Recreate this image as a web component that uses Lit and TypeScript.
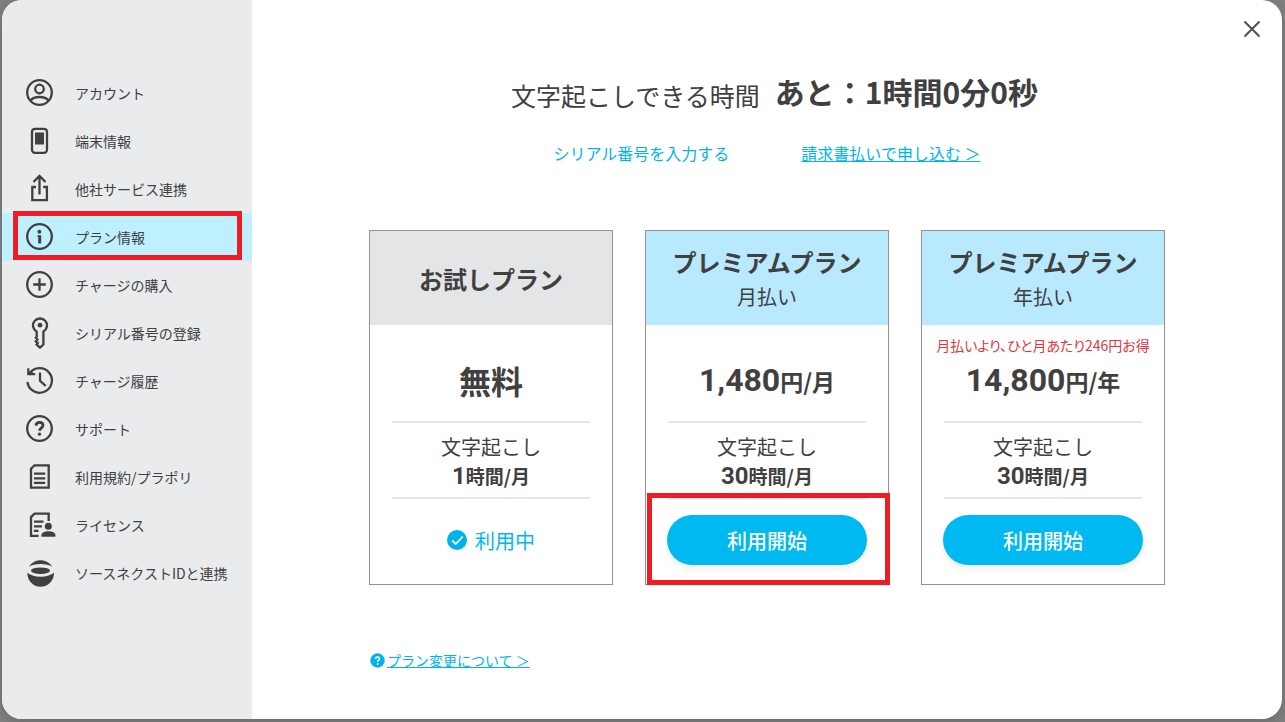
import { LitElement, html, css, svg, nothing } from "lit";
import { customElement, property, state } from "lit/decorators.js";
import { classMap } from "lit/directives/class-map.js";

const icons: Record<string, unknown> = {
  account: svg`<circle cx="15.5" cy="15.5" r="12.3"/><circle cx="15.5" cy="12" r="4.3"/><path d="M6.5 23.5C8.5 20.8 11.5 20 15.5 20s7 .8 9 3.5"/>`,
  device: svg`<rect x="8" y="3.8" width="15" height="24" rx="3"/><rect class="fill" x="11" y="7.5" width="9" height="12"/>`,
  share: svg`<path d="M15.5 21.5V3.5M9.5 9l6-6 6 6M12 14H8.3v13.2h14.6V14h-3.7"/>`,
  info: svg`<circle cx="15.5" cy="15.5" r="12.3"/><circle class="fill" cx="15.4" cy="10.8" r="2"/><path class="fill" d="M13.5 14.2h3.7v8.2h-3v-6.4h-.7z"/>`,
  plus: svg`<circle cx="15.5" cy="15.5" r="12.3"/><path d="M15.5 9.2v12.6M9.2 15.5h12.6"/>`,
  key: svg`<path d="M12.6 14.6a7 7 0 1 1 6.8 0V27.6L16 30.6l-3.4-3 1.2-1.6-2-1.6 1.6-1.9-1.6-1.8 1-1.3z"/><circle class="fill" cx="16" cy="8.2" r="2.4"/>`,
  history: svg`<path d="M3.4 17A12.3 12.3 0 1 0 5.6 8.3M16 7.5v8.3l5.7 5"/><path class="fill" d="M3.2 3.2h2.2v3.9l2.6-.4 1.2 1.4h2v2.2H3.2z"/>`,
  help: svg`<circle cx="15.5" cy="15.5" r="12.3"/><path class="bold" d="M12 12.6c.1-2 1.5-3.2 3.5-3.2s3.5 1.2 3.5 3c0 2.5-3.4 2.4-3.4 5.4"/><circle class="fill" cx="15.5" cy="21.2" r="1.6"/>`,
  document: svg`<path d="M10.5 4.3H24.7V26.7H7V7.8z"/><path d="M10 12.7h11.2M10 17.3h11.2M10 21.9h11.2"/>`,
  license: svg`<path d="M24.7 12V4.6H10.5L7 8.1v18.8h7.6M10 12.7h9.5M10 17.3h8M10 21.9h4.5"/><circle class="fill" cx="24.3" cy="17.3" r="3.5"/><path class="fill" d="M17.4 27.7v-1.5c0-2.8 3.6-4 7-4s7 1.2 7 4v1.5z"/>`,
  globe: svg`<path class="fill" d="M5 9.8C7.5 5.6 11.5 3.2 16.5 3.2S25.8 5.6 28.3 9.8C25.5 7.8 21.5 7 16.5 7S7.8 7.8 5 9.8z"/><ellipse class="fill" cx="16.5" cy="13.7" rx="9.5" ry="3.3"/><path class="fill" d="M3.3 15.8C6 18.2 10.5 19.7 16.6 19.7S27.2 18.2 30 15.8C30 24 24 29.7 16.6 29.7S3.3 24 3.3 15.8z"/>`,
};

const navItems = [
  ["account", "アカウント"],
  ["device", "端末情報"],
  ["share", "他社サービス連携"],
  ["info", "プラン情報"],
  ["plus", "チャージの購入"],
  ["key", "シリアル番号の登録"],
  ["history", "チャージ履歴"],
  ["help", "サポート"],
  ["document", "利用規約/プラポリ"],
  ["license", "ライセンス"],
  ["globe", "ソースネクストIDと連携"],
];

interface Plan {
  name: string;
  billing?: string;
  note?: string;
  amount?: string;
  unit: string;
  hours: string;
  active?: boolean;
  marked?: boolean;
}

const plans: Plan[] = [
  { name: "お試しプラン", unit: "無料", hours: "1", active: true },
  { name: "プレミアムプラン", billing: "月払い", amount: "1,480", unit: "円/月", hours: "30", marked: true },
  { name: "プレミアムプラン", billing: "年払い", note: "月払いより、ひと月あたり246円お得", amount: "14,800", unit: "円/年", hours: "30" },
];

@customElement("side-nav")
export class SideNav extends LitElement {
  @state() current = "info";

  static styles = css`
    :host {
      display: block;
      background: #eaebed;
    }
    ul {
      list-style: none;
      margin: 0;
      padding: 69px 0 0;
    }
    .item {
      position: relative;
    }
    .link {
      display: flex;
      align-items: center;
      gap: 19px;
      height: 48px;
      padding-left: 22px;
      color: #404040;
      font-size: 14px;
      text-decoration: none;
      white-space: nowrap;
    }
    .current {
      background: #bff0ff;
    }
    .mark {
      position: absolute;
      inset: -2px 10px 1px 11px;
      border: 5px solid #ee1c23;
      pointer-events: none;
    }
    svg {
      width: 32px;
      height: 32px;
      flex: none;
      fill: none;
      stroke: #404040;
      stroke-width: 2.3;
    }
    .fill {
      fill: #404040;
      stroke: none;
    }
    .bold {
      stroke-width: 2.8;
    }
  `;

  render() {
    return html`<nav>
      <ul>
        ${navItems.map(([id, label]) => html`<li class="item">
          <a href="#${id}" class=${classMap({ link: true, current: id === this.current })}
            @click=${() => (this.current = id)}>
            <svg viewBox="0 0 32 32" aria-hidden="true">${icons[id]}</svg>
            <span>${label}</span>
          </a>
          ${id === "info" ? html`<div class="mark"></div>` : nothing}
        </li>`)}
      </ul>
    </nav>`;
  }
}

@customElement("plan-card")
export class PlanCard extends LitElement {
  @property({ attribute: false }) plan!: Plan;

  static styles = css`
    :host {
      display: block;
      flex: 0 1 244px;
      box-sizing: border-box;
      position: relative;
      border: 1px solid #929292;
      text-align: center;
      white-space: nowrap;
    }
    .head {
      display: flex;
      flex-direction: column;
      justify-content: center;
      box-sizing: border-box;
      height: 94px;
      padding-top: 2px;
      background: #b9e9ff;
    }
    .trial {
      background: #e4e5e7;
    }
    h2 {
      margin: 0;
      font-size: 24px;
      line-height: 36px;
      font-weight: 700;
    }
    .billing {
      font-size: 20px;
      line-height: 34px;
    }
    .note {
      height: 32px;
      padding-top: 4px;
      box-sizing: border-box;
      color: #e03840;
      font-size: 14px;
      line-height: 32px;
      font-feature-settings: "palt";
    }
    .price {
      height: 64px;
      line-height: 46px;
      font-size: 23px;
      font-weight: 700;
    }
    .free {
      font-size: 32px;
    }
    .digits {
      font-family: Roboto, sans-serif;
      font-weight: 700;
    }
    .amount {
      font-size: 32px;
    }
    .quota {
      margin: 0 22px;
      padding: 9px 0 7px;
      border: solid #e6e6e6;
      border-width: 2px 0;
      font-size: 20px;
      line-height: 30px;
    }
    .hours {
      font-size: 19px;
      line-height: 28px;
      font-weight: 700;
    }
    .count {
      font-size: 24px;
    }
    .action {
      display: flex;
      justify-content: center;
      padding: 16px 21px 19px;
    }
    button {
      flex: 1;
      height: 50px;
      padding: 0;
      border: 0;
      border-radius: 25px;
      background: #00b9f1;
      box-shadow: 0 4px 6px rgba(0, 0, 0, 0.07);
      color: #fff;
      font: inherit;
      font-weight: 500;
      font-size: 20px;
    }
    .status {
      display: flex;
      align-items: center;
      gap: 8px;
      height: 50px;
      color: #00b9f1;
      font-size: 20px;
    }
    .status svg {
      width: 20px;
      height: 20px;
    }
    .mark {
      position: absolute;
      inset: 262px -2px -1px 1px;
      border: 5px solid #ee1c23;
      pointer-events: none;
    }
  `;

  render() {
    const p = this.plan;
    return html`
      <div class=${classMap({ head: true, trial: !p.billing })}>
        <h2>${p.name}</h2>
        ${p.billing ? html`<div class="billing">${p.billing}</div>` : nothing}
      </div>
      <div class="note">${p.note}</div>
      <div class=${classMap({ price: true, free: !p.amount })}>
        ${p.amount ? html`<span class="digits amount">${p.amount}</span>` : nothing}${p.unit}
      </div>
      <div class="quota">
        <div>文字起こし</div>
        <div class="hours"><span class="digits count">${p.hours}</span>時間/月</div>
      </div>
      <div class="action">
        ${p.active
          ? html`<div class="status">
              <svg viewBox="0 0 20 20" aria-hidden="true">
                <circle cx="10" cy="10" r="10" fill="#00b4eb" />
                <path d="M5.2 10.5l3.5 3.5 7-7.5" fill="none" stroke="#fff" stroke-width="1.8" />
              </svg>
              <span>利用中</span>
            </div>`
          : html`<button type="button">利用開始</button>`}
      </div>
      ${p.marked ? html`<div class="mark"></div>` : nothing}
    `;
  }
}

@customElement("app-root")
export class AppRoot extends LitElement {
  static styles = css`
    :host {
      display: block;
      box-sizing: border-box;
      min-height: 100vh;
      padding: 0 3px 3px 2px;
      background: #828282;
      color: #404040;
      font-family: "Noto Sans CJK JP", sans-serif;
    }
    .dialog {
      position: relative;
      display: grid;
      grid-template-columns: 250px minmax(0, 1fr);
      min-height: calc(100vh - 3px);
      border-radius: 20px;
      overflow: hidden;
      background: #fff;
      box-shadow: 0 4px 16px rgba(0, 0, 0, 0.2);
    }
    .close {
      position: absolute;
      top: 17px;
      right: 18px;
      width: 24px;
      height: 24px;
      padding: 0;
      border: 0;
      background: none;
    }
    .close svg {
      display: block;
      width: 24px;
      height: 24px;
    }
    main {
      padding: 71px 32px 32px;
    }
    h1 {
      display: flex;
      justify-content: center;
      align-items: flex-start;
      gap: 15px;
      margin: 0;
      padding-left: 15px;
      font-size: 25px;
      line-height: 48px;
      font-weight: 400;
    }
    .left {
      font-size: 30px;
      line-height: 40px;
      font-weight: 700;
    }
    .links {
      display: flex;
      justify-content: center;
      gap: 72px;
      margin: 22px 0 65px;
      font-size: 16px;
      line-height: 24px;
    }
    a {
      color: #00b4eb;
    }
    .plain {
      text-decoration: none;
    }
    .content {
      max-width: 796px;
      margin: 0 auto;
    }
    .plans {
      display: flex;
      gap: 32px;
    }
    .about {
      display: flex;
      align-items: center;
      gap: 2px;
      margin-top: 65px;
      padding-left: 1px;
      font-size: 14px;
      line-height: 21px;
    }
    .about svg {
      width: 15px;
      height: 15px;
    }
  `;

  render() {
    return html`<div class="dialog">
      <side-nav></side-nav>
      <main>
        <h1><span>文字起こしできる時間</span><span class="left">あと：1時間0分0秒</span></h1>
        <div class="links">
          <a class="plain" href="#serial">シリアル番号を入力する</a>
          <a href="#invoice">請求書払いで申し込む ＞</a>
        </div>
        <div class="content">
          <div class="plans">${plans.map((p) => html`<plan-card .plan=${p}></plan-card>`)}</div>
          <div class="about">
            <svg viewBox="0 0 15 15" aria-hidden="true">
              <circle cx="7.5" cy="7.5" r="7.2" fill="#00b4eb" />
              <path d="M5.5 6c0-1.4.8-2 2-2s2 .7 2 1.7c0 1.5-1.9 1.3-1.9 3.1" fill="none" stroke="#fff" stroke-width="1.6" />
              <circle cx="7.6" cy="11" r="1" fill="#fff" />
            </svg>
            <a href="#about">プラン変更について ＞</a>
          </div>
        </div>
      </main>
      <button class="close" type="button" aria-label="閉じる">
        <svg viewBox="0 0 24 24"><path d="M4.5 4.5l15 15M19.5 4.5l-15 15" fill="none" stroke="#505050" stroke-width="2" /></svg>
      </button>
    </div>`;
  }
}
